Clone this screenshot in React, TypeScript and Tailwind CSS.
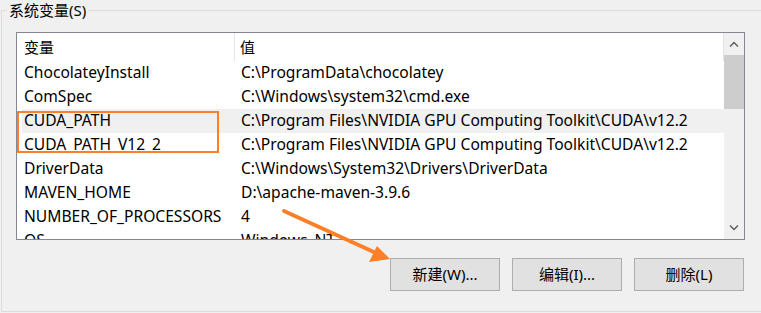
const rows: [string, string][] = [
  ['ChocolateyInstall', 'C:\\ProgramData\\chocolatey'],
  ['ComSpec', 'C:\\Windows\\system32\\cmd.exe'],
  ['CUDA_PATH', 'C:\\Program Files\\NVIDIA GPU Computing Toolkit\\CUDA\\v12.2'],
  ['CUDA_PATH_V12_2', 'C:\\Program Files\\NVIDIA GPU Computing Toolkit\\CUDA\\v12.2'],
  ['DriverData', 'C:\\Windows\\System32\\Drivers\\DriverData'],
  ['MAVEN_HOME', 'D:\\apache-maven-3.9.6'],
  ['NUMBER_OF_PROCESSORS', '4'],
  ['OS', 'Windows_NT'],
];

const font = { fontFamily: '"Noto Sans", "Noto Sans CJK SC", sans-serif' };

export default function App() {
  return (
    <div
      className="relative w-[761px] h-[313px] overflow-hidden bg-[#f0f0f0] text-[15px] text-black"
      style={font}
    >
      {/* group box */}
      <div className="relative mt-[10px] ml-[1px] w-[800px] h-[302px] border border-[#dcdcdc] pl-[14px] pt-[21px]">
        <span className="absolute -top-[11px] left-[5px] px-[2px] bg-[#f0f0f0] leading-[20px]">
          系统变量(S)
        </span>

        {/* list view */}
        <div className="flex w-[729px] h-[208px] border border-[#828790] bg-white">
          <div className="flex-1 overflow-hidden">
            <div className="flex h-[28px] items-center">
              <div className="w-[218px] h-full flex items-center pl-[7px] border-r border-[#e5e5e5]">变量</div>
              <div className="flex-1 h-full flex items-center pl-[5px] border-r border-[#e5e5e5]">值</div>
            </div>
            {rows.map(([name, value], i) => (
              <div
                key={name}
                className={`flex h-[24px] items-center ml-[5px] whitespace-nowrap text-[15.6px] ${i === 2 ? 'bg-[#f0f0f0]' : ''}`}
              >
                <div className="w-[213px] pl-[2px]">{name}</div>
                <div className="flex-1 pl-[6px]">{value}</div>
              </div>
            ))}
          </div>

          {/* scrollbar */}
          <div className="w-[20px] flex flex-col bg-[#f0f0f0]">
            <div className="h-[22px] flex items-center justify-center">
              <svg width="10" height="6" viewBox="0 0 10 6">
                <path d="M1 5.5 L5 1.5 L9 5.5" fill="none" stroke="#606060" strokeWidth="1.5" />
              </svg>
            </div>
            <div className="h-[54px] bg-[#cdcdcd]" />
            <div className="flex-1" />
            <div className="h-[22px] flex items-center justify-center">
              <svg width="10" height="6" viewBox="0 0 10 6">
                <path d="M1 0.5 L5 4.5 L9 0.5" fill="none" stroke="#606060" strokeWidth="1.5" />
              </svg>
            </div>
          </div>
        </div>

        {/* buttons */}
        <div className="flex gap-[12px] mt-[18px] ml-[374px]">
          {['新建(W)...', '编辑(I)...', '删除(L)'].map((label) => (
            <button
              key={label}
              className="w-[110px] h-[33px] border border-[#adadad] bg-[#e1e1e1] flex items-center justify-center"
            >
              {label}
            </button>
          ))}
        </div>
      </div>

      {/* annotations */}
      <svg className="absolute inset-0 pointer-events-none" width="761" height="313">
        <rect x="18" y="112" width="200" height="40" fill="none" stroke="#fd7f28" strokeWidth="2" />
        <line x1="284" y1="211" x2="376" y2="253" stroke="#fd7f28" strokeWidth="4" strokeLinecap="round" />
        <polygon points="390,259 369,262 377,246" fill="#fd7f28" />
      </svg>
    </div>
  );
}
